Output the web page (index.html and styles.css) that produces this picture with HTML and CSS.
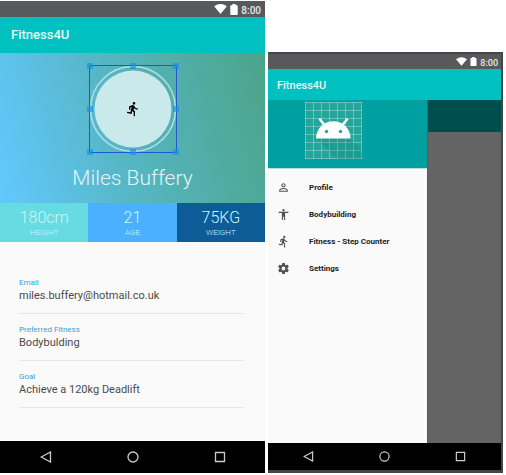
FILE: index.html
```html
<!DOCTYPE html>
<html lang="en">
<head>
<meta charset="utf-8">
<meta name="viewport" content="width=device-width, initial-scale=1">
<title>Fitness4U</title>
<link rel="stylesheet" href="styles.css">
</head>
<body>
<svg class="sprite" aria-hidden="true">
  <symbol id="wifi" viewBox="0 0 14 11"><path d="M0 2.600Q7-2.400 14 2.600L7 11z"/></symbol>
  <symbol id="battery" viewBox="0 0 8 11"><path d="M2.400 0h3.200v1.200H7q.7 0 .7.7v8.400q0 .7-.7.7H1q-.7 0-.7-.7V1.900q0-.7.7-.7h1.400z"/></symbol>
  <symbol id="back" viewBox="0 0 12 12"><path d="M10.500 1v10L1.200 6z"/></symbol>
  <symbol id="home" viewBox="0 0 12 12"><circle cx="6" cy="6" r="5"/></symbol>
  <symbol id="recent" viewBox="0 0 12 12"><path d="M1.500 1.500h9v9h-9z"/></symbol>
  <symbol id="run" viewBox="0 0 24 24"><path d="M13.490 5.480c1.100 0 2-.9 2-2s-.9-2-2-2-2 .9-2 2 .9 2 2 2zm-3.600 13.900l1-4.400 2.100 2v6h2v-7.500l-2.100-2 .6-3c1.300 1.500 3.300 2.500 5.500 2.500v-2c-1.900 0-3.500-1-4.300-2.400l-1-1.600c-.4-.6-1-1-1.700-1-.3 0-.5.1-.8.1l-5.200 2.200v4.700h2v-3.400l1.800-.7-1.600 8.100-4.900-1-.4 2 7 1.400z"/></symbol>
  <symbol id="person" viewBox="0 0 24 24"><path d="M12 5.900a2.100 2.100 0 1 1 0 4.200 2.100 2.100 0 0 1 0-4.200m0 9c2.970 0 6.100 1.460 6.100 2.100v1.100H5.900V17c0-.64 3.130-2.100 6.100-2.100M12 4C9.790 4 8 5.790 8 8s1.790 4 4 4 4-1.790 4-4-1.790-4-4-4zm0 9c-2.670 0-8 1.340-8 4v3h16v-3c0-2.660-5.330-4-8-4z"/></symbol>
  <symbol id="body" viewBox="0 0 24 24"><path d="M12 2c1.100 0 2 .9 2 2s-.9 2-2 2-2-.9-2-2 .9-2 2-2zm9 7h-6v13h-2v-6h-2v6H9V9H3V7h18v2z"/></symbol>
  <symbol id="gear" viewBox="0 0 24 24"><path d="M19.430 12.980c.04-.32.07-.64.07-.98s-.03-.66-.07-.98l2.110-1.650c.19-.15.24-.42.12-.64l-2-3.460c-.12-.22-.39-.3-.61-.22l-2.490 1c-.52-.4-1.080-.73-1.690-.98l-.38-2.650C14.460 2.180 14.250 2 14 2h-4c-.25 0-.46.18-.49.42l-.38 2.650c-.61.25-1.170.59-1.690.98l-2.490-1c-.23-.09-.49 0-.61.22l-2 3.460c-.13.22-.07.49.12.64l2.110 1.650c-.04.32-.07.65-.07.98s.03.66.07.98l-2.110 1.650c-.19.15-.24.42-.12.64l2 3.460c.12.22.39.3.61.22l2.490-1c.52.4 1.080.73 1.690.98l.38 2.650c.03.24.24.42.49.42h4c.25 0 .46-.18.49-.42l.38-2.650c.61-.25 1.170-.59 1.690-.98l2.490 1c.23.09.49 0 .61-.22l2-3.460c.12-.22.07-.49-.12-.64l-2.110-1.650zM12 15.500c-1.930 0-3.500-1.570-3.500-3.500s1.570-3.500 3.500-3.500 3.500 1.570 3.500 3.500-1.570 3.500-3.500 3.500z"/></symbol>
</svg>

<div class="board">
  <section class="phone profile" aria-label="Profile screen">
    <div class="status">
      <svg class="wifi"><use href="#wifi"/></svg>
      <svg class="battery"><use href="#battery"/></svg>
      <span>8:00</span>
    </div>
    <header class="toolbar"><h1>Fitness4U</h1></header>
    <div class="hero">
      <svg class="avatar" viewBox="0 0 92 92" role="img" aria-label="Avatar">
        <circle class="disc" cx="46" cy="46" r="38.500"/>
        <circle class="ring" cx="46" cy="46" r="42.500"/>
        <use class="runner" href="#run" x="38" y="38" width="16" height="16"/>
        <path class="frame" d="M2.500 2.500h87v87h-87z"/>
        <path class="handles" d="M0 0h6v6H0zM43 0h6v6h-6zM86 0h6v6h-6zM0 43h6v6H0zM86 43h6v6h-6zM0 86h6v6H0zM43 86h6v6h-6zM86 86h6v6h-6z"/>
      </svg>
      <h2 class="name">Miles Buffery</h2>
    </div>
    <dl class="stats">
      <div class="stat height"><dd>180cm</dd><dt>HEIGHT</dt></div>
      <div class="stat age"><dd>21</dd><dt>AGE</dt></div>
      <div class="stat weight"><dd>75KG</dd><dt>WEIGHT</dt></div>
    </dl>
    <dl class="details">
      <div class="detail"><dt>Email</dt><dd>miles.buffery@hotmail.co.uk</dd></div>
      <div class="detail"><dt>Preferred Fitness</dt><dd>Bodybulding</dd></div>
      <div class="detail"><dt>Goal</dt><dd>Achieve a 120kg Deadlift</dd></div>
    </dl>
    <div class="navbar">
      <button type="button" aria-label="Back"><svg><use href="#back"/></svg></button>
      <button type="button" aria-label="Home"><svg><use href="#home"/></svg></button>
      <button type="button" aria-label="Recent apps"><svg><use href="#recent"/></svg></button>
    </div>
  </section>

  <section class="phone menu" aria-label="Navigation drawer screen">
    <div class="status">
      <svg class="wifi"><use href="#wifi"/></svg>
      <svg class="battery"><use href="#battery"/></svg>
      <span>8:00</span>
    </div>
    <header class="toolbar"><h1>Fitness4U</h1></header>
    <div class="stage">
      <div class="drawer">
        <div class="drawer-head">
          <svg class="droid" viewBox="0 0 57 57" role="img" aria-label="Android">
            <path class="tile" d="M0 0h57v57H0z"/>
            <path class="grid" d="M.5 0v57M8.500 0v57M16.500 0v57M24.500 0v57M32.500 0v57M40.500 0v57M48.500 0v57M56.500 0v57M0 .5h57M0 8.500h57M0 16.500h57M0 24.500h57M0 32.500h57M0 40.500h57M0 48.500h57M0 56.500h57"/>
            <path class="shade" d="M11.500 36.500h34L57 48v9H32z"/>
            <path class="antenna" d="M15 17.500l5 6M42 17.500l-5 6"/>
            <path class="skull" d="M11 36.500a17.300 17.300 0 0 1 34.600 0z"/>
            <circle class="eye" cx="21.500" cy="29.500" r="1.700"/>
            <circle class="eye" cx="35.500" cy="29.500" r="1.700"/>
          </svg>
        </div>
        <nav class="links">
          <a href="#profile"><svg><use href="#person"/></svg>Profile</a>
          <a href="#bodybuilding"><svg><use href="#body"/></svg>Bodybuilding</a>
          <a href="#steps"><svg><use href="#run"/></svg>Fitness - Step Counter</a>
          <a href="#settings"><svg><use href="#gear"/></svg>Settings</a>
        </nav>
      </div>
      <div class="scrim"></div>
    </div>
    <div class="navbar">
      <button type="button" aria-label="Back"><svg><use href="#back"/></svg></button>
      <button type="button" aria-label="Home"><svg><use href="#home"/></svg></button>
      <button type="button" aria-label="Recent apps"><svg><use href="#recent"/></svg></button>
    </div>
  </section>
</div>
</body>
</html>
```

FILE: styles.css
```css
* { box-sizing: border-box; }

body {
  margin: 0;
  background: #fff;
  font-family: Roboto, "Liberation Sans", sans-serif;
}

h1, h2, dl, dd { margin: 0; }
svg { display: block; flex: none; }
.sprite { position: absolute; width: 0; height: 0; }

.board {
  display: grid;
  grid-template-columns: 265fr 235fr;
  gap: 3px;
  min-height: 100vh;
  padding: 1px 3px 2px 0;
}

.phone {
  display: flex;
  flex-direction: column;
  background: #fafafa;
}

.menu {
  margin-top: 51px;
  border: solid #44474a;
  border-width: 2px 2px 3px 0;
}

.status {
  display: flex;
  align-items: center;
  justify-content: flex-end;
  gap: 3px;
  height: 16px;
  padding: 0 4px 0 0;
  background: #57595b;
  color: #e8e8e8;
  fill: #fff;
  font-size: 10px;
  font-weight: 500;
  line-height: 12px;
}

.status span { padding-top: 3px; }
.wifi { width: 13px; height: 10px; }
.battery { width: 8px; height: 11px; }

.toolbar {
  display: flex;
  align-items: center;
  height: 36px;
  padding: 0 11px;
  background: #00c0c0;
  color: #e8fafa;
}

.toolbar h1 {
  font-size: 13px;
  font-weight: 500;
  line-height: 16px;
}

.menu .status { height: 15px; padding-right: 3px; font-size: 9px; }
.menu .wifi { width: 11px; height: 9px; }
.menu .battery { width: 7px; height: 9px; }
.menu .toolbar { height: 31px; padding: 3px 9px 0; }
.menu .toolbar h1 { font-size: 11px; }

.hero {
  display: flex;
  flex-direction: column;
  align-items: center;
  gap: 8px;
  padding: 10px 0;
  background: linear-gradient(75deg, #62c8ff 0%, #56b6c4 45%, #4ba488 100%);
}

.avatar { width: 92px; height: 92px; }
.disc { fill: #c9e9eb; }
.ring { fill: none; stroke: #b4e0e2; stroke-width: 1.500; }
.runner { fill: #000; }
.frame { fill: none; stroke: #2357cf; }
.handles { fill: #1590e8; fill-opacity: 0.65; }

.name {
  color: #e4f5f5;
  font-size: 21px;
  font-weight: 300;
  line-height: 30px;
}

.stats {
  display: grid;
  grid-template-columns: repeat(3, 1fr);
  color: #d3f3fa;
  font-weight: 300;
  text-align: center;
}

.stat {
  display: flex;
  flex-direction: column;
  padding: 5px 0 4px;
}

.stat dd { font-size: 16px; line-height: 20px; }
.stat dt { font-size: 8px; line-height: 10px; }
.height { background: #66dce2; }
.age { background: #4bb0ff; }
.weight { background: #0d5c98; }

.details {
  flex: 1;
  padding: 31px 21px 0 19px;
}

.detail {
  padding: 5px 0 9px;
  border-bottom: 1px solid #e6e6e6;
}

.detail + .detail { padding-top: 11px; }

.detail dt {
  color: #3b9fd6;
  font-size: 8px;
  line-height: 10px;
}

.detail dd {
  color: #4a4a4a;
  font-size: 11px;
  font-weight: 400;
  line-height: 16px;
}

.navbar {
  display: grid;
  grid-template-columns: repeat(3, 1fr);
  height: 32px;
  padding: 0 2px;
  background: #000;
}

.navbar button {
  display: flex;
  align-items: center;
  justify-content: center;
  padding: 0;
  border: 0;
  background: none;
}

.navbar svg {
  width: 12px;
  height: 12px;
  fill: none;
  stroke: #ccc;
  stroke-width: 1.300;
}

.menu .navbar { height: 27px; }
.menu .navbar svg { width: 11px; height: 11px; }

.stage {
  flex: 1;
  display: grid;
  grid-template-columns: 159fr 74fr;
}

.drawer-head {
  padding: 2px 37px 9px;
  border-bottom: 1px solid #b5dfe0;
  background: #00a0a0;
}

.droid { width: 57px; height: 57px; }
.tile { fill: #26a69a; }
.grid { fill: none; stroke: #fff; stroke-opacity: 0.3; }
.shade { fill: #00796b; fill-opacity: 0.2; }
.skull { fill: #fff; }
.antenna { fill: none; stroke: #fff; stroke-width: 2.500; stroke-linecap: round; }
.eye { fill: #26a69a; }

.links {
  display: flex;
  flex-direction: column;
  padding: 5px 0;
}

.links a {
  display: flex;
  align-items: center;
  gap: 19px;
  height: 27px;
  padding: 0 9px;
  color: #222;
  font-size: 8px;
  font-weight: 700;
  text-decoration: none;
}

.links svg { width: 13px; height: 13px; fill: #505050; }

.scrim {
  border-left: 1px solid #585858;
  background: linear-gradient(#004d4d 32px, #646464 32px);
}
```
